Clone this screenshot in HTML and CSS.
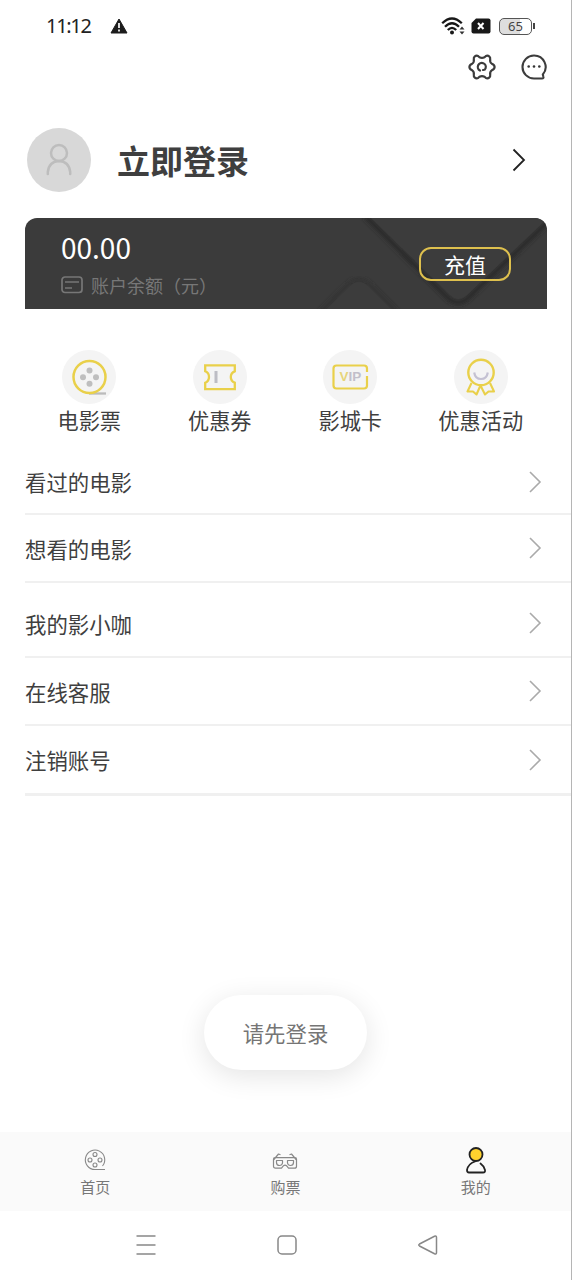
FILE: index.html
```html
<!DOCTYPE html>
<html lang="zh-CN">
<head>
<meta charset="utf-8">
<title>我的</title>
<link rel="stylesheet" href="styles.css">
</head>
<body>
<div class="screen">
  <header class="status">
    <span class="time">11:12</span>
    <svg class="warn" width="18" height="16" viewBox="0 0 18 16"><path d="M9 1 17 15H1Z" fill="#1c1c1c" stroke="#1c1c1c" stroke-linejoin="round"/><path d="M9 5v5M9 11.5v2" stroke="#ddd" stroke-width="2"/></svg>
    <svg class="wifi" width="24" height="20" viewBox="0 0 24 20" fill="none" stroke="#181818" stroke-width="2.3"><path d="M1.2 7.3Q11 -2.4 20.8 7.3M4 10.7Q11 3.8 18 10.7M6.8 14Q11 9.8 15.2 14"/><circle cx="11" cy="16.5" r="2" fill="#181818" stroke="none"/><path d="m18.500 13.500 2.500-3 2.500 3Zm0 2 2.500 3 2.500-3Z" fill="#333" stroke="none"/></svg>
    <svg class="sim" width="20" height="16" viewBox="0 0 20 16"><path d="M5 .5h12.500q2 0 2 2v11q0 2-2 2h-15q-2 0-2-2V5Z" fill="#181818"/><path d="m7 5 5.500 6m0-6L7 11" stroke="#fff" stroke-width="2"/></svg>
    <span class="battery">65</span><i class="battery-tip"></i>
  </header>

  <div class="tools">
    <svg width="28" height="28" viewBox="0 0 28 28" fill="none" stroke="#3c3c3c" stroke-width="2.200" stroke-linecap="round" stroke-linejoin="round"><path d="M6.800 3.400Q8.500 2 10.300 3.200L11.500 4.300Q14 5.600 16.500 4.300L17.700 3.200Q19.500 2 21.200 3.400 22.500 4.400 22.200 6.200 21.700 9.300 23.800 10.700 26.600 12 26.600 14T23.800 17.300Q21.700 18.700 22.200 21.800 22.500 23.600 21.200 24.600 19.500 26 17.700 24.800L16.500 23.700Q14 22.400 11.500 23.700L10.300 24.800Q8.500 26 6.800 24.600 5.500 23.600 5.800 21.800 6.300 18.700 4.200 17.300 1.400 16 1.400 14T4.200 10.700Q6.300 9.300 5.800 6.200 5.500 4.400 6.800 3.400Z"/><path d="M12 17.500A4 4 0 1 1 17.600 15.200Q17 17.200 15 17"/></svg>
    <svg width="26" height="26" viewBox="0 0 26 26"><path d="M13 1.500a11.500 11.500 0 0 0 0 23h8q2 0 1.300-2l-.5-2A11.500 11.500 0 0 0 13 1.500Z" fill="none" stroke="#3c3c3c" stroke-width="2.100" stroke-linejoin="round"/><g fill="#333"><circle cx="7.700" cy="12.500" r="1.300"/><circle cx="13" cy="12.500" r="1.300"/><circle cx="18.300" cy="12.500" r="1.300"/></g></svg>
  </div>

  <section class="login">
    <span class="avatar"><svg width="28" height="34" viewBox="0 0 28 34" fill="none" stroke="#bdbdbd" stroke-width="2.500" stroke-linecap="round"><circle cx="14" cy="10" r="8"/><path d="M2.800 31v-2q1.200-10.500 11.200-11 10 .5 11.200 11v2"/></svg></span>
    <h1>立即登录</h1>
    <svg class="go" width="14" height="24" viewBox="0 0 14 24"><path d="m1.500 1.500 10.500 10.500L1.500 22.500" fill="none" stroke="#222" stroke-width="1.800"/></svg>
  </section>

  <section class="wallet">
    <svg class="pattern" width="522" height="91" viewBox="0 0 522 91">
      <defs><filter id="soft" x="-10%" y="-10%" width="120%" height="130%"><feGaussianBlur stdDeviation="2"/></filter></defs>
      <path d="M340-2 423 80Q433 89 443 80L526 1" fill="none" stroke="#282828" stroke-width="4" filter="url(#soft)"/>
      <path d="M340-6 425 77Q433 85 442 77L530-7Z" fill="#3c3c3c"/>
      <path d="M295 94 324 66Q334 57 344 66L372 94" fill="none" stroke="#2e2e2e" stroke-width="2.500" filter="url(#soft)"/>
      <path d="M299 94 325 68Q334 60 343 68L369 94Z" fill="#3c3c3c"/>
    </svg>
    <div class="balance">
      <strong>00.00</strong>
      <span class="caption"><svg width="22" height="18" viewBox="0 0 22 18" fill="none" stroke="#777" stroke-width="1.700"><rect x="1" y="1" width="20" height="15.500" rx="3"/><path d="M4 6h14M4 12h7"/></svg>账户余额（元）</span>
    </div>
    <button class="topup">充值</button>
  </section>

  <nav class="shortcuts">
    <a><svg width="54" height="54" viewBox="0 0 54 54" fill="none"><circle cx="27" cy="27" r="27" fill="#f4f4f4"/><path d="M27 43.500h17" stroke="#bbb" stroke-width="2.300"/><circle cx="27.500" cy="27" r="16" stroke="#e9d04a" stroke-width="2.500"/><g fill="#bebebe"><circle cx="27.500" cy="20.500" r="3"/><circle cx="21" cy="27.200" r="3"/><circle cx="34" cy="27.200" r="3"/><circle cx="27.500" cy="33.700" r="3"/></g></svg><span>电影票</span></a>
    <a><svg width="54" height="54" viewBox="0 0 54 54" fill="none"><circle cx="27" cy="27" r="27" fill="#f4f4f4"/><path d="M12.200 15.300h29.600v6q-4 1.500-4 5.700t4 5.700v6.500H12.200v-6.500q3.800-1.500 3.800-5.700t-3.800-5.700Z" stroke="#e9d04a" stroke-width="2.300"/><path d="M23 21v12" stroke="#bdbdc4" stroke-width="3"/></svg><span>优惠券</span></a>
    <a><svg width="54" height="54" viewBox="0 0 54 54" fill="none"><circle cx="27" cy="27" r="27" fill="#f4f4f4"/><path d="M44 22v-3.500q0-3-3-3H13.500q-3 0-3 3v17q0 3 3 3H41q3 0 3-3V26" stroke="#e9d04a" stroke-width="2.200"/><text class="vip" x="16.500" y="31.200" fill="#e7d47a">V<tspan fill="#c2bfca">IP</tspan></text></svg><span>影城卡</span></a>
    <a><svg width="54" height="54" viewBox="0 0 54 54" fill="none"><circle cx="27" cy="27" r="27" fill="#f4f4f4"/><circle cx="27" cy="22.500" r="12.700" stroke="#e9d04a" stroke-width="2.400"/><path d="m17.500 33-4 8.500h5.500l3.500 3 3.500-8m10-3.500 4 8.500h-5.500l-3.500 3-4.500-9" stroke="#e9d04a" stroke-width="2.100" stroke-linejoin="round"/><path d="M20.200 22.500q1 6.500 6.800 6.500t6.800-6.500" stroke="#c4c1d2" stroke-width="2.200"/></svg><span>优惠活动</span></a>
  </nav>

  <ul class="menu">
    <li>看过的电影<svg width="14" height="24" viewBox="0 0 14 24"><path d="m2 2 10 10L2 22"/></svg></li>
    <li>想看的电影<svg width="14" height="24" viewBox="0 0 14 24"><path d="m2 2 10 10L2 22"/></svg></li>
    <li class="gap">我的影小咖<svg width="14" height="24" viewBox="0 0 14 24"><path d="m2 2 10 10L2 22"/></svg></li>
    <li>在线客服<svg width="14" height="24" viewBox="0 0 14 24"><path d="m2 2 10 10L2 22"/></svg></li>
    <li class="last">注销账号<svg width="14" height="24" viewBox="0 0 14 24"><path d="m2 2 10 10L2 22"/></svg></li>
  </ul>

  <div class="toast">请先登录</div>

  <nav class="tabs">
    <a><svg width="24" height="26" viewBox="0 0 24 26" fill="none" stroke="#888" stroke-width="1.100"><path d="M22 22.500H12A9.700 9.700 0 1 1 19.500 19"/><circle cx="12" cy="7.500" r="2"/><circle cx="7" cy="13" r="2"/><circle cx="17" cy="13" r="2"/><circle cx="12" cy="18" r="2"/></svg><span>首页</span></a>
    <a><svg width="26" height="26" viewBox="0 0 26 26" fill="none" stroke="#888" stroke-width="1.200" stroke-linejoin="round"><path d="M1.500 13 6.500 7l2 .7M24.500 13l-5-6-2 .7M3 10.700h20q1.500 0 1.500 1.500v7q0 2-2 2h-6l-2-2.500q-1.500-1-3 0l-2 2.500h-6q-2 0-2-2v-7q0-1.500 1.500-1.500Z"/><path d="M4.500 13.500h6v2.500q-.5 2.500-3 2.500-3 0-3-3Zm11 0h6v2q0 3-3 3-2.500 0-3-2.500Z"/></svg><span>购票</span></a>
    <a><svg width="24" height="28" viewBox="0 0 24 28" fill="none" stroke="#222" stroke-width="1.800" stroke-linecap="round"><circle cx="12" cy="8.500" r="6.500" fill="#ffd22e"/><path d="M11 15.500Q4 18 3 24q0 2.500 2 2.500h14q2.500 0 2-2.500-1-4-4.500-6.500"/></svg><span>我的</span></a>
  </nav>

  <footer class="system">
    <svg width="22" height="22" viewBox="0 0 22 22"><path d="M1.500 2h19M1.500 11h19M1.500 20h19"/></svg>
    <svg width="22" height="22" viewBox="0 0 22 22"><rect x="2" y="2" width="18" height="18" rx="4"/></svg>
    <svg width="22" height="22" viewBox="0 0 22 22"><path d="M17.500 2.300Q19.500 1.500 19.500 3.500v15q0 2-2 1.200L2.500 12Q1 11 2.500 10Z"/></svg>
  </footer>
</div>
</body>
</html>
```
FILE: styles.css
```css
* { box-sizing: border-box; }
body {
  margin: 0;
  background: #fff;
  color: #3f3f3f;
  font-family: "Noto Sans CJK SC", sans-serif;
}
svg { display: block; flex: none; }
.screen {
  width: 572px;
  height: 1280px;
  display: flex;
  flex-direction: column;
  border-right: 1px solid #b5b5b5;
  overflow: hidden;
}
.status {
  height: 50px;
  padding: 2px 36px 0 46px;
  display: flex;
  align-items: center;
}
.time { font: 20px/20px "Noto Sans", sans-serif; letter-spacing: -1.300px; width: 64px; color: #222; }
.wifi { margin-left: auto; }
.sim { margin: 0 8px 0 6px; }
.battery {
  width: 33px;
  height: 17px;
  border: 1.500px solid #555;
  border-radius: 5px;
  background: linear-gradient(90deg, #dedede 64%, #fff 64%);
  font: 13px/15px "Noto Sans", sans-serif;
  text-align: center;
  color: #444;
}
.battery-tip { width: 2px; height: 6px; background: #444; margin-left: 1px; }
.tools {
  height: 34px;
  padding-right: 24px;
  display: flex;
  justify-content: flex-end;
  align-items: center;
  gap: 25px;
}
.login {
  height: 134px;
  padding: 18px 45px 0 27px;
  display: flex;
  align-items: center;
}
.avatar {
  width: 64px;
  height: 64px;
  border-radius: 50%;
  background: #d8d8d8;
  display: flex;
  align-items: center;
  justify-content: center;
}
.login h1 { margin: 0 0 0 26px; font-size: 33px; line-height: 44px; font-weight: 700; }
.go { margin-left: auto; }
.wallet {
  position: relative;
  height: 91px;
  margin: 0 24px 0 25px;
  padding: 0 36px;
  border-radius: 12px 12px 0 0;
  background: #3b3b3b;
  overflow: hidden;
  display: flex;
  justify-content: space-between;
  align-items: center;
}
.pattern { position: absolute; inset: 0; }
.balance { position: relative; display: flex; flex-direction: column; gap: 9px; }
.balance strong { font-weight: 400; font-size: 28px; line-height: 34px; color: #fff; }
.caption { display: flex; align-items: center; gap: 8px; font-size: 18px; line-height: 24px; color: #777; }
.topup {
  position: relative;
  width: 92px;
  height: 34px;
  padding: 0;
  border: 2px solid #dec04e;
  border-radius: 12px;
  background: none;
  color: #fff;
  font: 21px/28px "Noto Sans CJK SC", sans-serif;
}
.shortcuts {
  height: 141px;
  padding: 41px 25px 0 24px;
  display: grid;
  grid-template-columns: repeat(4, 1fr);
}
.shortcuts a { display: flex; flex-direction: column; align-items: center; font-size: 21.200px; line-height: 32px; }
.vip { font: bold 13.500px "Liberation Sans", sans-serif; }
.menu { list-style: none; margin: 0; padding: 0 0 0 25px; font-size: 21.400px; }
.menu li {
  height: 68px;
  padding-right: 29px;
  border-bottom: 2px solid #f0f0f0;
  display: flex;
  align-items: center;
  justify-content: space-between;
}
.menu li:first-child { height: 65px; }
.menu .gap { height: 75px; padding-top: 7px; }
.menu .last { height: 70px; border-bottom-width: 3px; }
.menu svg { fill: none; stroke: #aaa; stroke-width: 1.600; }
.toast {
  width: 163px;
  height: 75px;
  margin: 199px auto 0;
  border-radius: 38px;
  box-shadow: 0 6px 28px rgba(0, 0, 0, .11);
  font-size: 21.400px;
  line-height: 76px;
  text-align: center;
  color: #757575;
}
.tabs {
  height: 79px;
  margin-top: auto;
  background: #fafafa;
  display: grid;
  grid-template-columns: repeat(3, 1fr);
}
.tabs a {
  padding-top: 14px;
  display: flex;
  flex-direction: column;
  align-items: center;
  font-size: 15px;
  line-height: 22px;
  color: #777;
}
.tabs svg { height: 28px; margin-bottom: 2px; }
.system { height: 69px; display: flex; gap: 119px; padding: 23px 0 0 135px; }
.system svg { fill: none; stroke: #888; stroke-width: 1.500; }
```
